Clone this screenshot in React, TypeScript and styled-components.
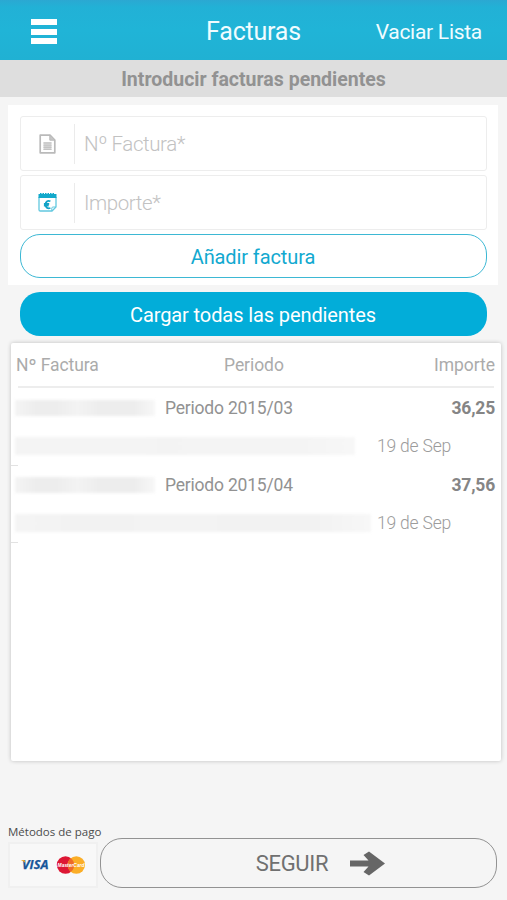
import React from "react";
import styled, { createGlobalStyle } from "styled-components";

const GlobalStyle = createGlobalStyle`
  * { box-sizing: border-box; }
  body { margin: 0; background: #f5f5f5; font-family: Roboto, "Open Sans", sans-serif; }
  button, input { font-family: inherit; }
`;

const Screen = styled.main`
  width: 507px;
  height: 900px;
  display: flex;
  flex-direction: column;
  overflow: hidden;
  background: #f5f5f5;
`;

const Header = styled.header`
  height: 60px;
  flex: none;
  display: grid;
  grid-template-columns: 1fr auto 1fr;
  align-items: center;
  padding: 3px 25px 0 31px;
  background: linear-gradient(#2ba8d2 0, #22b1d6 7px, #20b4d7 30px, #20b1d3 100%);
  color: #f0fcff;
`;

const MenuButton = styled.button`
  width: 26px;
  height: 25px;
  padding: 0;
  border: 0;
  background: none;
  display: flex;
  flex-direction: column;
  justify-content: space-between;
`;

const MenuBar = styled.span`
  height: 6px;
  background: #fff;
`;

const Title = styled.h1`
  margin: 0 6px 0 0;
  font-size: 25px;
  font-weight: 400;
  line-height: 30px;
  letter-spacing: -0.2px;
`;

const ClearLink = styled.span`
  justify-self: end;
  font-size: 21px;
  line-height: 30px;
  letter-spacing: -0.28px;
  padding-top: 1px;
  white-space: nowrap;
`;

const SubHeader = styled.h2`
  margin: 0;
  height: 37px;
  flex: none;
  background: #dedede;
  color: #929292;
  font-size: 19.5px;
  font-weight: 700;
  line-height: 39px;
  text-align: center;
`;

const FormCard = styled.section`
  margin: 8px 9px 0 8px;
  height: 180px;
  flex: none;
  background: #fff;
  padding: 11px 11px 0 12px;
  display: flex;
  flex-direction: column;
`;

const Field = styled.label`
  height: 55px;
  margin-bottom: 4px;
  border: 1px solid #ededed;
  border-radius: 3px;
  display: flex;
  align-items: center;
`;

const FieldIcon = styled.span`
  width: 54px;
  height: 40px;
  border-right: 1px solid #ebebeb;
  display: flex;
  align-items: center;
  justify-content: center;
`;

const FieldInput = styled.input`
  flex: 1;
  min-width: 0;
  border: 0;
  outline: 0;
  background: none;
  padding: 0 9px;
  font-size: 20.5px;
  font-weight: 300;
  letter-spacing: -0.42px;
  &::placeholder { color: #c2c2c2; opacity: 1; }
`;

const PillButton = styled.button<{ $filled?: boolean }>`
  flex: none;
  height: 44px;
  border: ${(p) => (p.$filled ? "0" : "1.5px solid #3db8d4")};
  border-radius: 20px;
  padding: 2px 1px 0 0;
  background: ${(p) => (p.$filled ? "#02add9" : "#fff")};
  color: ${(p) => (p.$filled ? "#fff" : "#12a9d0")};
  font-size: 20px;
  font-weight: 400;
  letter-spacing: -0.1px;
`;

const LoadRow = styled.div`
  flex: none;
  display: grid;
  padding: 7px 20px 0;
`;

const TableCard = styled.section`
  flex: none;
  margin: 7px 6px 0 11px;
  height: 418px;
  background: #fff;
  border-radius: 2px;
  box-shadow: 0 0 4px rgba(0, 0, 0, 0.22);
`;

const TableHead = styled.div`
  height: 45px;
  margin: 0 7px;
  border-bottom: 2px solid #ededed;
  display: grid;
  grid-template-columns: 207px 1fr auto;
  align-items: center;
  color: #ababab;
  font-size: 17.5px;
`;

const HeadCell = styled.span<{ $shift?: number }>`
  margin-left: ${(p) => p.$shift ?? 0}px;
  margin-right: -1px;
  padding-top: 1px;
  letter-spacing: -0.05px;
`;

const Row = styled.article`
  height: 77.5px;
  padding: 0 6px 0 4px;
  display: flex;
  flex-direction: column;
  &::after {
    content: "";
    width: 7px;
    height: 1px;
    margin-left: -4px;
    margin-top: 1px;
    background: #e2e2e2;
  }
`;

const RowLine = styled.div<{ $height: number }>`
  height: ${(p) => p.$height}px;
  display: flex;
  align-items: center;
  padding-bottom: 2px;
`;

const Redacted = styled.span<{ $width: number; $height: number; $color: string; $gap: number }>`
  flex: none;
  width: ${(p) => p.$width}px;
  height: ${(p) => p.$height}px;
  margin-right: ${(p) => p.$gap}px;
  background: linear-gradient(90deg, #f4f4f4, ${(p) => p.$color} 15%, ${(p) => p.$color} 30%, #f3f3f3 45%, ${(p) => p.$color} 60%, ${(p) => p.$color} 85%, #f7f7f7);
  filter: blur(1.5px);
`;

const Period = styled.span`
  color: #929292;
  font-size: 17.5px;
  letter-spacing: -0.2px;
`;

const Amount = styled.strong`
  margin-left: auto;
  color: #858585;
  font-size: 17.5px;
  font-weight: 700;
  letter-spacing: -0.2px;
`;

const DateText = styled.span`
  color: #9c9c9c;
  font-size: 17.5px;
  font-weight: 300;
  letter-spacing: -0.2px;
`;

const Footer = styled.footer`
  margin-top: auto;
  height: 76px;
  flex: none;
  display: flex;
  align-items: flex-start;
  padding: 0 10px 0 8px;
`;

const Payment = styled.div`
  width: 92px;
  flex: none;
`;

const PaymentLabel = styled.div`
  height: 18px;
  font-size: 11.5px;
  line-height: 15px;
  color: #4c4c4c;
  white-space: nowrap;
  font-family: "Open Sans", sans-serif;
`;

const Cards = styled.div`
  width: 90px;
  height: 46px;
  border: 2px solid #f0f0f0;
  background: #f8f8f8;
  display: flex;
  align-items: center;
  padding-left: 10px;
`;

const NextButton = styled.button`
  flex: 1;
  height: 50px;
  margin-top: 14px;
  border: 1.5px solid #929292;
  border-radius: 22px;
  background: #f5f5f5;
  color: #707070;
  padding: 0 0 0 44px;
  display: flex;
  align-items: center;
  justify-content: center;
  gap: 22px;
  font-size: 22px;
  font-weight: 400;
  letter-spacing: -0.35px;
`;

const DocumentIcon = () => (
  <svg width="17" height="20" viewBox="0 0 17 20">
    <path d="M1.2 1.2H11L15.8 6V18.8H1.2Z" fill="#fff" stroke="#bababa" strokeWidth="1.7" strokeLinejoin="round" />
    <path d="M10.8 1V6.2H16Z" fill="#c6c6c6" stroke="#bababa" strokeWidth="1" />
    <path d="M4.5 8H12.5V16H4.5Z" fill="#d6d6d6" />
    <path d="M4.5 9H12.5M4.5 11.2H12.5M4.5 13.4H12.5M4.5 15.5H12.5" stroke="#c3c3c3" strokeWidth="1.1" />
  </svg>
);

const AmountIcon = () => (
  <svg width="19" height="19" viewBox="0 0 19 19">
    <path d="M1 4V16.7Q1 18 2.3 18H14L18 14V4" fill="#fff" stroke="#62c8df" strokeWidth="1.3" />
    <path d="M13.8 18V15Q14 14 15 14H18" fill="none" stroke="#62c8df" strokeWidth="1" />
    <path d="M.5 1H18.5V5H.5Z" fill="#12a9cb" />
    <path d="M2 .8H17" stroke="#12a9cb" strokeWidth="1.4" strokeDasharray="1.5 1" />
    <path d="M12.4 8.3C9.5 7 7.5 8.9 7.5 11.6S9.5 16.1 12.4 15M5.9 10.8H11.2M5.9 12.6H10.7" fill="none" stroke="#12a3c7" strokeWidth="1.7" />
  </svg>
);

const PaymentLogos = () => (
  <svg width="72" height="20" viewBox="0 0 72 20">
    <text x="2" y="14.3" fontFamily="Open Sans, sans-serif" fontSize="12.8" fontWeight="700" fontStyle="italic" fill="#17569a" stroke="#17569a" strokeWidth=".25" textLength="26.5" lengthAdjust="spacingAndGlyphs">VISA</text>
    <path d="M.8 5H4.6L5.4 8Q3.5 5.8.8 5Z" fill="#eba52e" />
    <circle cx="45.5" cy="10" r="8.7" fill="#dd1734" />
    <circle cx="56.3" cy="10" r="8.7" fill="#fbae27" />
    <path d="M50.9 3.2A8.7 8.7 0 0 1 50.9 16.8A8.7 8.7 0 0 1 50.9 3.2Z" fill="#ee6a28" />
    <text x="37.6" y="11.8" fontFamily="Liberation Sans, sans-serif" fontSize="4.9" fontWeight="700" fontStyle="italic" fill="#fff">MasterCard</text>
  </svg>
);

const ArrowIcon = () => (
  <svg width="35" height="25" viewBox="0 0 35 25">
    <path d="M0 9.4H18.5L13.5 4L19 .5L35 12.5L19 24.5L13.5 21L18.5 15.6H0Z" fill="#666" />
  </svg>
);

const invoices = [
  { period: "Periodo 2015/03", amount: "36,25", date: "19 de Sep", nameWidth: 340, tone: "#f4f4f4" },
  { period: "Periodo 2015/04", amount: "37,56", date: "19 de Sep", nameWidth: 356, tone: "#f2f2f2" },
];

export default function App() {
  return (
    <>
      <GlobalStyle />
      <Screen>
        <Header>
          <MenuButton aria-label="Menú">
            <MenuBar />
            <MenuBar />
            <MenuBar />
          </MenuButton>
          <Title>Facturas</Title>
          <ClearLink>Vaciar Lista</ClearLink>
        </Header>
        <SubHeader>Introducir facturas pendientes</SubHeader>
        <FormCard>
          <Field>
            <FieldIcon><DocumentIcon /></FieldIcon>
            <FieldInput placeholder="Nº Factura*" />
          </Field>
          <Field>
            <FieldIcon><AmountIcon /></FieldIcon>
            <FieldInput placeholder="Importe*" />
          </Field>
          <PillButton>Añadir factura</PillButton>
        </FormCard>
        <LoadRow>
          <PillButton $filled>Cargar todas las pendientes</PillButton>
        </LoadRow>
        <TableCard>
          <TableHead>
            <HeadCell $shift={-2}>Nº Factura</HeadCell>
            <HeadCell $shift={-1}>Periodo</HeadCell>
            <HeadCell>Importe</HeadCell>
          </TableHead>
          {invoices.map((invoice) => (
            <Row key={invoice.period}>
              <RowLine $height={42}>
                <Redacted $width={140} $height={16} $color="#ededed" $gap={10} />
                <Period>{invoice.period}</Period>
                <Amount>{invoice.amount}</Amount>
              </RowLine>
              <RowLine $height={34}>
                <Redacted $width={invoice.nameWidth} $height={18} $color={invoice.tone} $gap={362 - invoice.nameWidth} />
                <DateText>{invoice.date}</DateText>
              </RowLine>
            </Row>
          ))}
        </TableCard>
        <Footer>
          <Payment>
            <PaymentLabel>Métodos de pago</PaymentLabel>
            <Cards><PaymentLogos /></Cards>
          </Payment>
          <NextButton>
            SEGUIR
            <ArrowIcon />
          </NextButton>
        </Footer>
      </Screen>
    </>
  );
}
